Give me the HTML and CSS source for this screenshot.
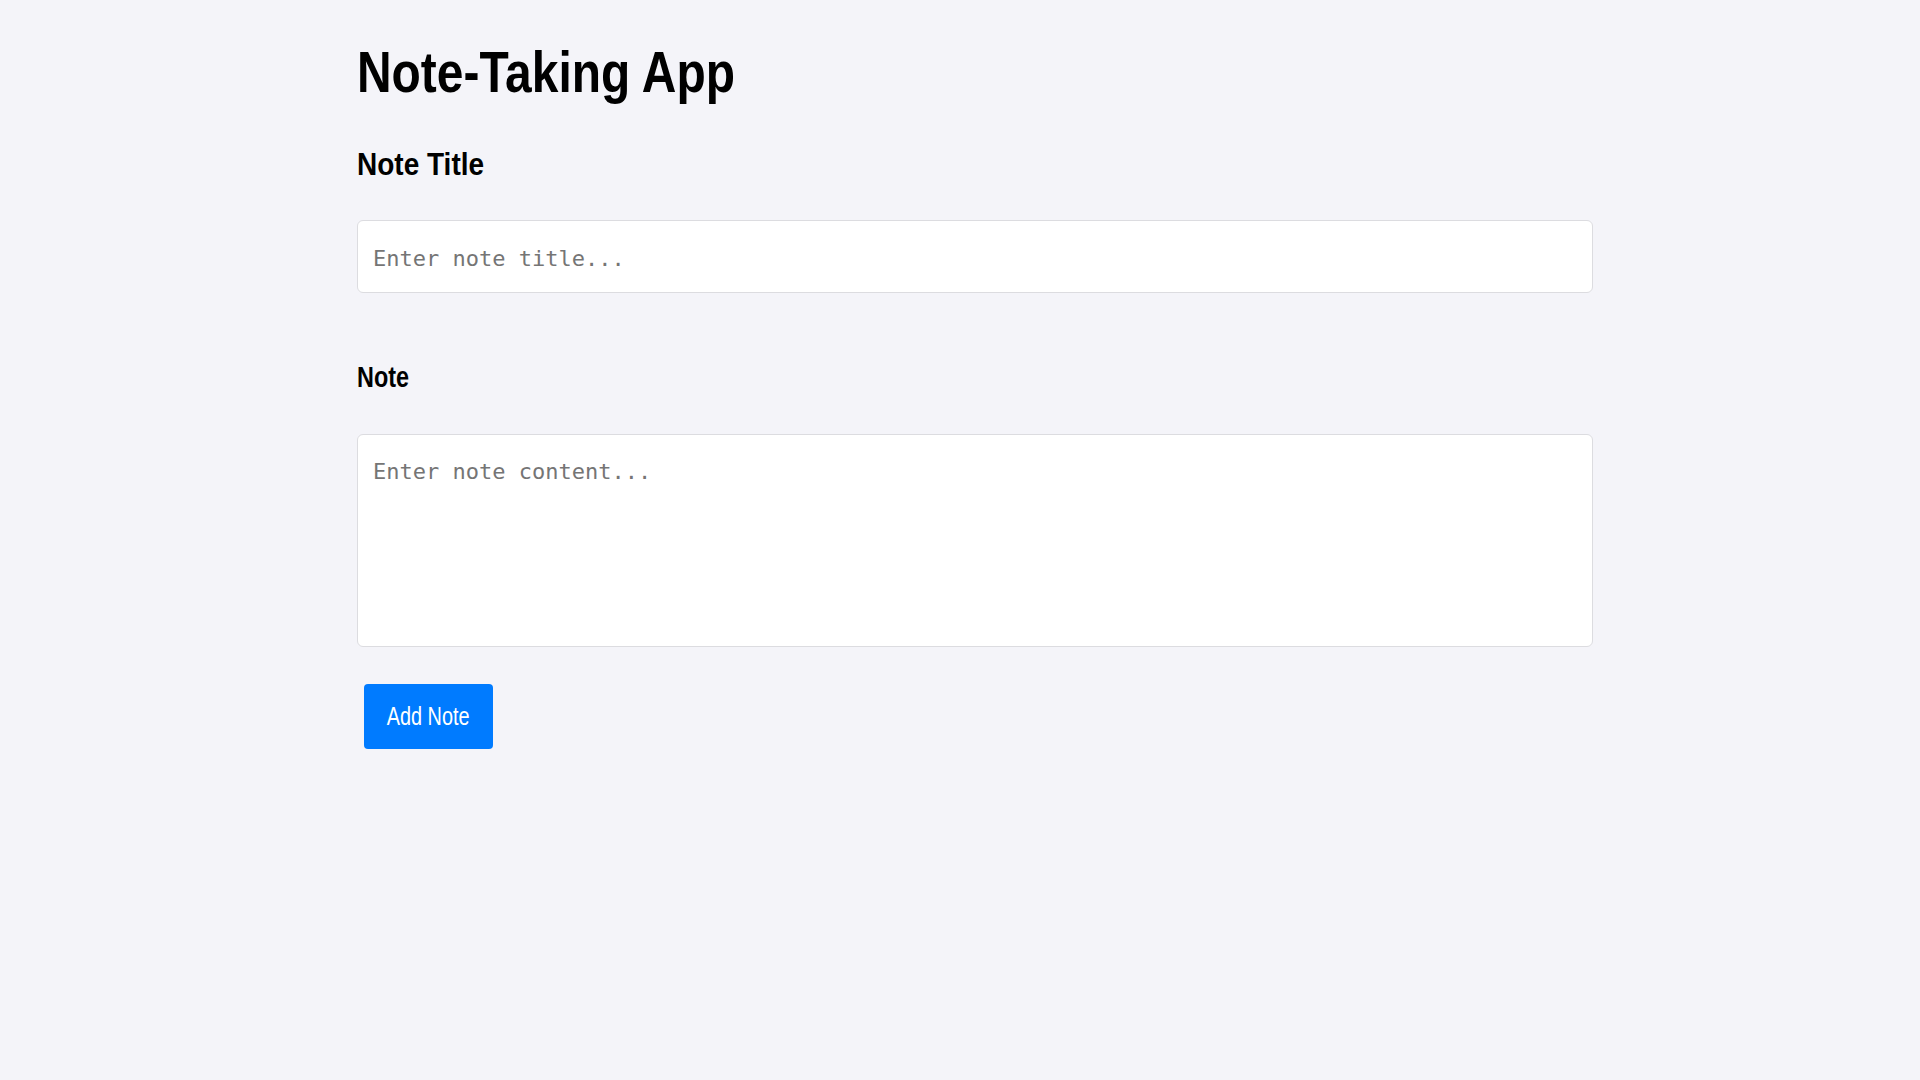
FILE: index.html
```html
<!DOCTYPE html>
<html lang="en">
<head>
<meta charset="utf-8">
<title>Note-Taking App</title>
<link rel="stylesheet" href="styles.css">
</head>
<body>
<main class="app">
  <h1 class="app-title"><span class="narrow narrow-title">Note-Taking App</span></h1>
  <form class="note-form">
    <label class="field-label" for="title"><span class="narrow narrow-label1">Note Title</span></label>
    <input class="field-input" id="title" type="text" placeholder="Enter note title...">
    <label class="field-label field-label-note" for="content"><span class="narrow narrow-label2">Note</span></label>
    <textarea class="field-area" id="content" placeholder="Enter note content..."></textarea>
    <button class="add-btn" type="button"><span class="narrow narrow-btn">Add Note</span></button>
  </form>
</main>
</body>
</html>
```
FILE: styles.css
```css
html, body {
  margin: 0;
  padding: 0;
}
body {
  background: #f4f4f9;
  font-family: "Liberation Sans", Arial, sans-serif;
  color: #000;
}
.app {
  width: 1236px;
  margin-left: 357px;
  padding-top: 43px;
}
.narrow {
  display: inline-block;
  white-space: nowrap;
  transform-origin: left center;
}
.narrow-title {
  transform: scaleX(0.826);
}
.narrow-label1 {
  transform: scaleX(0.875);
}
.narrow-label2 {
  transform: scaleX(0.78);
}
.narrow-btn {
  transform: scaleX(0.795);
  transform-origin: center center;
}
.app-title {
  margin: 0;
  font-size: 58px;
  line-height: 58px;
  font-weight: bold;
}
.note-form {
  display: flex;
  flex-direction: column;
  align-items: flex-start;
}
.field-label {
  display: block;
  font-weight: bold;
}
.field-label:first-child {
  margin-top: 47px;
  font-size: 32px;
  line-height: 32px;
}
.field-label-note {
  margin-top: 69px;
  font-size: 30px;
  line-height: 30px;
}
.field-input,
.field-area {
  box-sizing: border-box;
  width: 1236px;
  border: 1px solid #dcdce0;
  border-radius: 6px;
  background: #fff;
  font-family: "DejaVu Sans Mono", monospace;
  font-size: 22px;
  color: #000;
  outline: none;
}
.field-input {
  height: 73px;
  margin-top: 40px;
  padding: 3px 15px 0;
}
.field-area {
  height: 213px;
  margin-top: 42px;
  padding: 24px 15px 0;
  line-height: normal;
  resize: none;
}
.field-input::placeholder,
.field-area::placeholder {
  color: #757575;
}
.add-btn {
  box-sizing: border-box;
  margin-top: 37px;
  margin-left: 7px;
  width: 129px;
  height: 65px;
  padding: 0;
  border: none;
  border-radius: 4px;
  background: #007bff;
  color: #fff;
  font-family: "Liberation Sans", Arial, sans-serif;
  font-size: 25px;
}
```
